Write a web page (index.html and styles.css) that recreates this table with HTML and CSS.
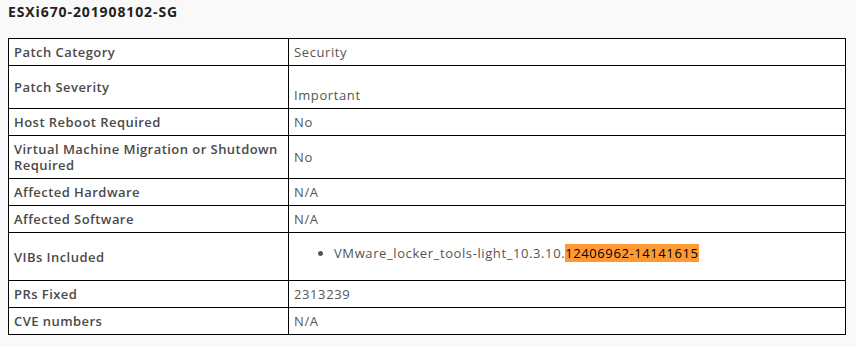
FILE: index.html
```html
<!DOCTYPE html>
<html lang="en">
<head>
    <meta charset="UTF-8">
    <meta name="viewport" content="width=device-width, initial-scale=1.0">
    <title>ESXi670-201908102-SG</title>
    <link rel="stylesheet" href="styles.css">
</head>
<body>

    <h4 class="bulletin-title">ESXi670-201908102-SG</h4>

    <table class="patch-table">
        <tbody>
            <tr>
                <td class="label">Patch Category</td>
                <td>Security</td>
            </tr>
            <tr>
                <td class="label">Patch Severity</td>
                <td><br>Important</td>
            </tr>
            <tr>
                <td class="label">Host Reboot Required</td>
                <td>No</td>
            </tr>
            <tr>
                <td class="label">Virtual Machine Migration or Shutdown Required</td>
                <td>No</td>
            </tr>
            <tr>
                <td class="label">Affected Hardware</td>
                <td>N/A</td>
            </tr>
            <tr>
                <td class="label">Affected Software</td>
                <td>N/A</td>
            </tr>
            <tr>
                <td class="label">VIBs Included</td>
                <td>
                    <ul class="vib-list">
                        <li>VMware_locker_tools-light_10.3.10.<mark>12406962-14141615</mark></li>
                    </ul>
                </td>
            </tr>
            <tr>
                <td class="label">PRs Fixed</td>
                <td>2313239</td>
            </tr>
            <tr>
                <td class="label">CVE numbers</td>
                <td>N/A</td>
            </tr>
        </tbody>
    </table>

</body>
</html>
```

FILE: styles.css
```css
:root {
    --page-bg: #f9f9f9;
    --cell-bg: #ffffff;
    --border: #000000;
    --title: #1f1f1f;
    --label: #4a4a4a;
    --value: #555555;
    --highlight: #ff9933;
}

* {
    box-sizing: border-box;
}

body {
    margin: 0;
    padding: 2px 8px 8px;
    background-color: var(--page-bg);
    font-family: 'Open Sans', 'Liberation Sans', Arial, sans-serif;
    font-size: 13px;
    line-height: 16px;
    color: var(--value);
}

.bulletin-title {
    margin: 0 0 16px;
    font-size: 14px;
    line-height: 20px;
    font-weight: 700;
    letter-spacing: 0.9px;
    color: var(--title);
}

.patch-table {
    width: 838px;
    border-collapse: collapse;
    background-color: var(--cell-bg);
}

.patch-table td {
    border: 1px solid var(--border);
    padding: 5px 5px;
    vertical-align: middle;
    font-weight: 400;
    letter-spacing: 0.6px;
}

.patch-table td.label {
    width: 280px;
    font-weight: 600;
    letter-spacing: 0.45px;
    color: var(--label);
}

.vib-list {
    margin: 7px 0 14px;
    padding-left: 40px;
}

.vib-list li::marker {
    color: var(--value);
}

mark {
    background-color: var(--highlight);
    color: #000000;
    padding: 0;
}
```
